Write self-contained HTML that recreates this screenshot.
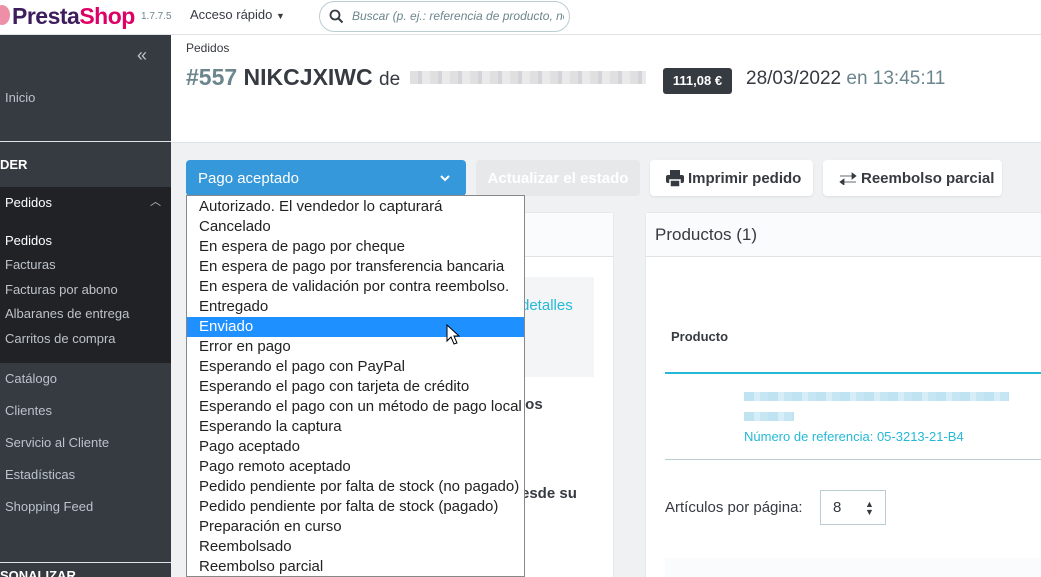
<!DOCTYPE html>
<html><head><meta charset="utf-8"><style>
*{box-sizing:border-box;margin:0;padding:0}
html,body{width:1041px;height:577px;overflow:hidden}
body{position:relative;font-family:"Liberation Sans",sans-serif;background:#eff1f2;color:#363a41}
.a{position:absolute}
.top{left:0;top:0;width:1041px;height:35px;background:#fff;border-bottom:1px solid #dfe3e5}
.side{left:0;top:35px;width:171px;height:542px;background:#363a41;color:#bcc3ca;font-size:13px}
.side .a{white-space:nowrap}
.hdr{left:171px;top:35px;width:870px;height:108px;background:#fff;border-bottom:1px solid #dfe3e5}
.btn{background:#fff;border-radius:4px;font-size:15px;font-weight:bold;color:#363a41;height:36px;line-height:38px;box-shadow:0 1px 2px rgba(0,0,0,.08)}
.card{background:#fff;border-radius:4px 4px 0 0;border:1px solid #e6e9ea}
.dd{left:186px;top:195px;width:339px;height:382px;background:#fff;border:1px solid #888;font-size:15px;color:#222;padding-top:1px}
.dd div{height:20px;line-height:20px;padding-left:12px;white-space:nowrap}
.dd .s{background:#1e90ff;color:#fff}
.blur{background:repeating-linear-gradient(90deg,#d8d8d8 0 8px,#c8cad0 8px 12px,#e4e4e4 12px 20px)}
.bblue{background:repeating-linear-gradient(90deg,#bfe3f0 0 10px,#d6eef7 10px 16px,#c5e6f2 16px 24px)}
</style></head><body>
<div class="a top"></div>
<div class="a" style="left:-6px;top:5px;width:16px;height:20px;border-radius:50%;background:#ee8fa8"></div>
<div class="a" style="left:12px;top:3px;font-size:23px;font-weight:bold;letter-spacing:-0.5px"><span style="color:#3d1d5c">Presta</span><span style="color:#df0067">Shop</span></div>
<div class="a" style="left:141px;top:11px;font-size:10px;color:#6c868e">1.7.7.5</div>
<div class="a" style="left:190px;top:7px;font-size:13px;color:#363a41">Acceso rápido <span style="font-size:9px">▼</span></div>
<div class="a" style="left:319px;top:1px;width:251px;height:31px;border:1px solid #bbcdd2;border-radius:16px;background:#fff"></div>
<svg class="a" style="left:329px;top:9px" width="15" height="15" viewBox="0 0 15 15"><circle cx="6" cy="6" r="4.5" fill="none" stroke="#363a41" stroke-width="1.8"/><path d="M9.5 9.5L13.5 13.5" stroke="#363a41" stroke-width="2"/></svg>
<div class="a" style="left:352px;top:9px;width:212px;overflow:hidden;white-space:nowrap;font-size:12px;font-style:italic;color:#6c868e">Buscar (p. ej.: referencia de producto, no</div>

<div class="a side">
<div class="a" style="left:137px;top:10px;font-size:18px;color:#bcc3ca">«</div>
<div class="a" style="left:5px;top:55px">Inicio</div>
<div class="a" style="left:0;top:106px;width:171px;height:1px;background:#dfe3e5"></div>
<div class="a" style="left:0;top:122px;font-weight:bold;color:#fff">DER</div>
<div class="a" style="left:0;top:152px;width:171px;height:176px;background:#202226"></div>
<div class="a" style="left:5px;top:160px;color:#fff">Pedidos</div>
<div class="a" style="left:150px;top:158px;font-size:11px">︿</div>
<div class="a" style="left:5px;top:198px;color:#fff">Pedidos</div>
<div class="a" style="left:5px;top:222px">Facturas</div>
<div class="a" style="left:5px;top:247px">Facturas por abono</div>
<div class="a" style="left:5px;top:271px">Albaranes de entrega</div>
<div class="a" style="left:5px;top:296px">Carritos de compra</div>
<div class="a" style="left:5px;top:336px">Catálogo</div>
<div class="a" style="left:5px;top:368px">Clientes</div>
<div class="a" style="left:5px;top:400px">Servicio al Cliente</div>
<div class="a" style="left:5px;top:432px">Estadísticas</div>
<div class="a" style="left:5px;top:464px">Shopping Feed</div>
<div class="a" style="left:0;top:527px;width:171px;height:1px;background:#dfe3e5"></div>
<div class="a" style="left:0;top:533px;font-weight:bold;color:#fff">SONALIZAR</div>
</div>

<div class="a hdr"></div>
<div class="a" style="left:186px;top:41px;font-size:12px;color:#363a41">Pedidos</div>
<div class="a" style="left:186px;top:64px;font-size:23px;font-weight:bold;color:#363a41;white-space:nowrap"><span style="color:#6c868e">#557</span> NIKCJXIWC <span style="font-weight:normal;font-size:19px">de</span></div>
<div class="a blur" style="left:410px;top:71px;width:236px;height:13px;opacity:.8"></div>
<div class="a" style="left:663px;top:68px;width:69px;height:26px;background:#363a41;border-radius:3px;color:#fff;font-size:13px;font-weight:bold;line-height:26px;text-align:center">111,08 €</div>
<div class="a" style="left:746px;top:68px;font-size:19px;color:#363a41;white-space:nowrap">28/03/2022 <span style="color:#6c868e">en 13:45:11</span></div>

<div class="a" style="left:186px;top:160px;width:280px;height:36px;background:#3498db;border-radius:4px;color:#fff;font-size:15px;line-height:38px;padding-left:12px">Pago aceptado</div>
<svg class="a" style="left:439px;top:173px" width="12" height="10"><path d="M2 3l4 4 4-4" fill="none" stroke="#fff" stroke-width="2"/></svg>
<div class="a btn" style="left:476px;top:160px;width:164px;background:#e6e8ea;color:#fff;text-align:center;box-shadow:none">Actualizar el estado</div>
<div class="a btn" style="left:650px;top:160px;width:163px;padding-left:38px">Imprimir pedido</div>
<svg class="a" style="left:666px;top:170px" width="18" height="17" viewBox="0 0 18 17"><rect x="4" y="0" width="10" height="5" fill="#363a41"/><rect x="0" y="5" width="18" height="8" rx="2" fill="#363a41"/><rect x="4" y="10" width="10" height="7" fill="#363a41" stroke="#fff" stroke-width="1.5"/></svg>
<div class="a btn" style="left:823px;top:160px;width:179px;padding-left:38px">Reembolso parcial</div>
<svg class="a" style="left:839px;top:172px" width="18" height="13"><path d="M4 10h13M1 10l4-3v6zM1 4h13M17 4l-4-3v6z" fill="#363a41" stroke="#363a41" stroke-width="0.8"/></svg>

<div class="a card" style="left:186px;top:212px;width:428px;height:370px"></div>
<div class="a" style="left:187px;top:213px;width:426px;height:44px;background:#fafbfc;border-bottom:1px solid #dfe3e5"></div>
<div class="a" style="left:210px;top:277px;width:384px;height:100px;background:#f4f5f6"></div>
<div class="a" style="left:521px;top:297px;font-size:15px;color:#25b9d7">detalles</div>
<div class="a" style="left:521px;top:396px;font-size:15px;font-weight:bold">los</div>
<div class="a" style="left:521px;top:485px;font-size:15px;font-weight:bold">esde su</div>

<div class="a card" style="left:645px;top:212px;width:400px;height:370px"></div>
<div class="a" style="left:646px;top:213px;width:395px;height:44px;background:#fafbfc;border-bottom:1px solid #dfe3e5"></div>
<div class="a" style="left:655px;top:225px;font-size:17px">Productos (1)</div>
<div class="a" style="left:671px;top:329px;font-size:13px;font-weight:bold">Producto</div>
<div class="a" style="left:665px;top:372px;width:376px;height:2px;background:#25b9d7"></div>
<div class="a bblue" style="left:744px;top:392px;width:265px;height:9px"></div>
<div class="a bblue" style="left:744px;top:412px;width:50px;height:9px"></div>
<div class="a" style="left:744px;top:429px;font-size:13px;color:#25b9d7">Número de referencia: 05-3213-21-B4</div>
<div class="a" style="left:665px;top:459px;width:376px;height:1px;background:#bbcdd2"></div>
<div class="a" style="left:665px;top:499px;font-size:15px">Artículos por página:</div>
<div class="a" style="left:820px;top:490px;width:66px;height:35px;border:1px solid #bbcdd2;background:#fff;font-size:15px;line-height:33px;padding-left:12px">8<span class="a" style="left:44px;top:0;font-size:9px;line-height:8px;padding-top:9px">▲<br>▼</span></div>
<div class="a" style="left:665px;top:558px;width:376px;height:19px;background:#fafbfc"></div>

<div class="a dd">
<div>Autorizado. El vendedor lo capturará</div>
<div>Cancelado</div>
<div>En espera de pago por cheque</div>
<div>En espera de pago por transferencia bancaria</div>
<div>En espera de validación por contra reembolso.</div>
<div>Entregado</div>
<div class="s">Enviado</div>
<div>Error en pago</div>
<div>Esperando el pago con PayPal</div>
<div>Esperando el pago con tarjeta de crédito</div>
<div>Esperando el pago con un método de pago local</div>
<div>Esperando la captura</div>
<div>Pago aceptado</div>
<div>Pago remoto aceptado</div>
<div>Pedido pendiente por falta de stock (no pagado)</div>
<div>Pedido pendiente por falta de stock (pagado)</div>
<div>Preparación en curso</div>
<div>Reembolsado</div>
<div>Reembolso parcial</div>
</div>
<svg class="a" style="left:446px;top:324px" width="14" height="21" viewBox="0 0 14 21"><path d="M1 1v16l4-4 3 7 3-1-3-7h5z" fill="#fff" stroke="#000" stroke-width="1"/></svg>
</body></html>
